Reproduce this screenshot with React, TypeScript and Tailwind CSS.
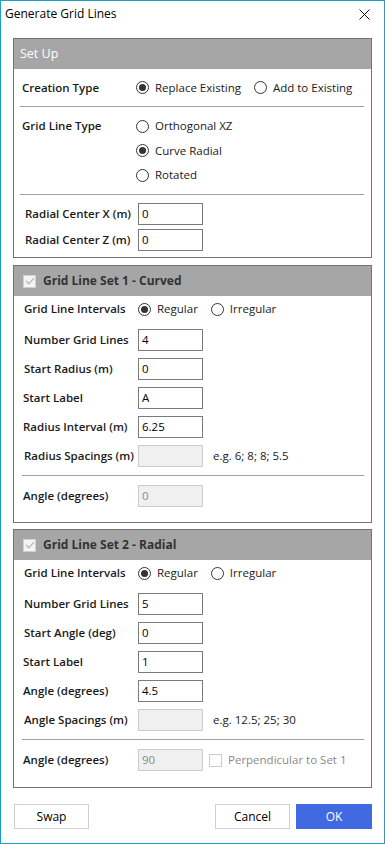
import React from "react";

const font = "font-['Open_Sans','Noto_Sans',sans-serif]";

function Radio({ checked, label }: { checked?: boolean; label: string }) {
  return (
    <div className="flex items-center gap-[6px]">
      <span className="w-[13px] h-[13px] rounded-full border border-[#333] flex items-center justify-center bg-white">
        {checked && <span className="w-[7px] h-[7px] rounded-full bg-[#333]" />}
      </span>
      <span className="text-[#1a1a1a]">{label}</span>
    </div>
  );
}

function Field({
  label,
  value,
  disabled,
  labelX = "pl-[11px]",
  extra,
}: {
  label: string;
  value: string;
  disabled?: boolean;
  labelX?: string;
  extra?: React.ReactNode;
}) {
  return (
    <div className="flex items-center h-[22px]">
      <div className={`w-[124px] font-semibold text-[#1a1a1a] ${labelX}`}>{label}</div>
      <div
        className={`w-[65px] h-[22px] border flex items-center px-[3px] ${
          disabled ? "bg-[#f0f0f0] border-[#cccccc] text-[#8a8a8a]" : "bg-white border-[#7a7a7a] text-black"
        }`}
      >
        {value}
      </div>
      {extra}
    </div>
  );
}

function DisabledCheck({ light }: { light?: boolean }) {
  return (
    <span
      className={`w-[13px] h-[13px] border flex items-center justify-center ${
        light ? "border-[#cccccc] bg-white" : "border-[#cfcfcf] bg-[#f4f4f4]"
      }`}
    >
      {!light && (
        <svg width="10" height="8" viewBox="0 0 10 8">
          <path d="M1 4 L3.8 6.8 L9 1.2" fill="none" stroke="#b5b5b5" strokeWidth="1.2" />
        </svg>
      )}
    </span>
  );
}

function Panel({ title, check, children }: { title: string; check?: boolean; children: React.ReactNode }) {
  return (
    <div className="mx-[12px] border border-[#737373] bg-white">
      <div className="h-[30px] bg-[#a6a6a6] flex items-center px-[9px] gap-[7px]">
        {check && <DisabledCheck />}
        <span className={check ? "font-bold text-[#333] text-[12px]" : "text-white ml-[-3px] text-[12.5px]"}>
          {title}
        </span>
      </div>
      {children}
    </div>
  );
}

function Sep({ className = "" }: { className?: string }) {
  return <div className={`h-px bg-[#a0a0a0] ${className}`} />;
}

export default function App() {
  return (
    <div className={`w-[385px] h-[844px] border border-[#1ba0c6] bg-white flex flex-col text-[11.5px] ${font}`}>
      <div className="h-[26px] flex items-center justify-between pl-[4px] pr-[14px] shrink-0">
        <span className="text-[12px] text-black">Generate Grid Lines</span>
        <svg width="11" height="11" viewBox="0 0 11 11">
          <path d="M0.5 0.5 L10.5 10.5 M10.5 0.5 L0.5 10.5" stroke="#111" strokeWidth="1" />
        </svg>
      </div>

      <div className="mt-[11px]">
        <Panel title="Set Up">
          <div className="h-[37px] flex items-center pl-[8px]">
            <div className="w-[114px] font-semibold text-[#1a1a1a]">Creation Type</div>
            <div className="flex items-center gap-[13px]">
              <Radio checked label="Replace Existing" />
              <Radio label="Add to Existing" />
            </div>
          </div>
          <Sep className="ml-[6px] mr-[7px]" />
          <div className="flex pl-[8px] pt-[7px]">
            <div className="w-[114px] font-semibold text-[#1a1a1a] h-[24px] flex items-center">Grid Line Type</div>
            <div className="flex flex-col">
              <div className="h-[24px] flex items-center"><Radio label="Orthogonal XZ" /></div>
              <div className="h-[25px] flex items-center"><Radio checked label="Curve Radial" /></div>
              <div className="h-[24px] flex items-center"><Radio label="Rotated" /></div>
            </div>
          </div>
          <Sep className="ml-[6px] mr-[7px] mt-[7px]" />
          <div className="flex flex-col gap-[4px] pt-[8px] pb-[6px]">
            <Field label="Radial Center X (m)" value="0" labelX="pl-[11px] w-[122px]" />
            <Field label="Radial Center Z (m)" value="0" labelX="pl-[11px] w-[122px]" />
          </div>
        </Panel>
      </div>

      <div className="mt-[7px]">
        <Panel title="Grid Line Set 1 - Curved" check>
          <div className="h-[26px] flex items-center pl-[10px]">
            <div className="w-[114px] font-semibold text-[#1a1a1a]">Grid Line Intervals</div>
            <div className="flex items-center gap-[13px]">
              <Radio checked label="Regular" />
              <Radio label="Irregular" />
            </div>
          </div>
          <div className="flex flex-col gap-[7px] pt-[7px]">
            <Field label="Number Grid Lines" value="4" labelX="pl-[10px]" />
            <Field label="Start Radius (m)" value="0" labelX="pl-[10px]" />
            <Field label="Start Label" value="A" labelX="pl-[9px]" />
            <Field label="Radius Interval (m)" value="6.25" labelX="pl-[9px]" />
            <Field
              label="Radius Spacings (m)"
              value=""
              disabled
              labelX="pl-[10px]"
              extra={<span className="ml-[10px] text-[#1a1a1a]">e.g. 6; 8; 8; 5.5</span>}
            />
          </div>
          <Sep className="ml-[8px] mr-[7px] mt-[8px]" />
          <div className="pt-[9px] pb-[15px]">
            <Field label="Angle (degrees)" value="0" disabled labelX="pl-[9px]" />
          </div>
        </Panel>
      </div>

      <div className="mt-[6px]">
        <Panel title="Grid Line Set 2 - Radial" check>
          <div className="h-[26px] flex items-center pl-[10px]">
            <div className="w-[114px] font-semibold text-[#1a1a1a]">Grid Line Intervals</div>
            <div className="flex items-center gap-[13px]">
              <Radio checked label="Regular" />
              <Radio label="Irregular" />
            </div>
          </div>
          <div className="flex flex-col gap-[7px] pt-[7px]">
            <Field label="Number Grid Lines" value="5" labelX="pl-[10px]" />
            <Field label="Start Angle (deg)" value="0" labelX="pl-[10px]" />
            <Field label="Start Label" value="1" labelX="pl-[9px]" />
            <Field label="Angle (degrees)" value="4.5" labelX="pl-[9px]" />
            <Field
              label="Angle Spacings (m)"
              value=""
              disabled
              labelX="pl-[10px]"
              extra={<span className="ml-[10px] text-[#1a1a1a]">e.g. 12.5; 25; 30</span>}
            />
          </div>
          <Sep className="ml-[8px] mr-[7px] mt-[8px]" />
          <div className="pt-[9px] pb-[16px]">
            <Field
              label="Angle (degrees)"
              value="90"
              disabled
              labelX="pl-[9px]"
              extra={
                <div className="flex items-center gap-[6px] ml-[6px]">
                  <DisabledCheck light />
                  <span className="text-[#8a8a8a]">Perpendicular to Set 1</span>
                </div>
              }
            />
          </div>
        </Panel>
      </div>

      <div className="flex items-center justify-between pl-[13px] pr-[12px] mt-[16px]">
        <button className="w-[75px] h-[25px] border border-[#d0d0d0] bg-white text-black text-[12px]">Swap</button>
        <div className="flex gap-[6px]">
          <button className="w-[75px] h-[25px] border border-[#d0d0d0] bg-white text-black text-[12px]">Cancel</button>
          <button className="w-[76px] h-[25px] bg-[#4169e1] text-white text-[12px]">OK</button>
        </div>
      </div>
    </div>
  );
}
